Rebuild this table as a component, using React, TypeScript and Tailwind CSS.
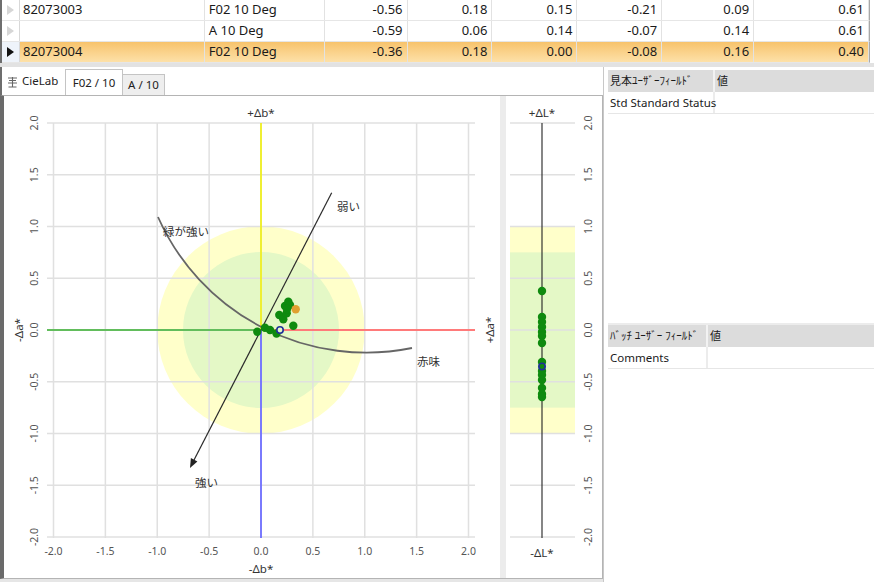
import React from "react";

type Row = { id: string; ill: string; v: string[]; sel?: boolean };

const rows: Row[] = [
  { id: "82073003", ill: "F02 10 Deg", v: ["-0.56", "0.18", "0.15", "-0.21", "0.09", "0.61"] },
  { id: "", ill: "A 10 Deg", v: ["-0.59", "0.06", "0.14", "-0.07", "0.14", "0.61"] },
  { id: "82073004", ill: "F02 10 Deg", v: ["-0.36", "0.18", "0.00", "-0.08", "0.16", "0.40"], sel: true },
];

// value column widths, written out so tailwind picks them up
const valueCols = ["w-[83px]", "w-[85px]", "w-[85px]", "w-[85px]", "w-[92px]", "w-[115px]"];

const ticks = [-2, -1.5, -1, -0.5, 0, 0.5, 1, 1.5, 2];
const CX = 261;
const CY = 330;
const UX = 103.75;
const UY = 103.5;
const px = (v: number) => CX + v * UX;
const py = (v: number) => CY - v * UY;
const fmt = (v: number) => v.toFixed(1);

const abDots: [number, number][] = [
  [257.3, 331.7], [265, 327.7], [270, 330], [276.5, 333.5], [293.3, 325.7],
  [279.3, 315], [283.3, 319.3], [286.7, 313.3], [285, 306], [288.3, 301.7],
  [290, 305], [287, 309],
];

const lDots = [291, 317, 322, 327, 332, 336, 343, 362, 371, 375, 380, 388, 394, 397];

function Arrow({ sel }: { sel?: boolean }) {
  return (
    <svg width="7" height="10" viewBox="0 0 7 10">
      <polygon points="0,0 7,5 0,10" fill={sel ? "#111" : "#d6d6d6"} />
    </svg>
  );
}

function DataGrid() {
  return (
    <div className="h-[63px] flex flex-col border-l-2 border-[#6e6e6e] overflow-hidden">
      {rows.map((r, i) => (
        <div
          key={i}
          className={
            "flex h-[21px] w-[868px] border-b border-[#e6e6e6] border-r border-r-[#a8a8a8] text-[13px] text-[#1a1a1a] " +
            (r.sel ? "bg-linear-to-b from-[#f7c36b] to-[#fde1a8]" : "bg-white")
          }
        >
          <div
            className={
              "w-[18px] flex items-center justify-center border-r border-[#d8d8d8] " +
              (r.sel ? "bg-[#eef3fa]" : "bg-white")
            }
          >
            <Arrow sel={r.sel} />
          </div>
          <div className="w-[185px] flex items-center pl-[3px] border-r border-[#e2e2e2]">{r.id}</div>
          <div className="w-[120px] flex items-center pl-[4px] border-r border-[#e2e2e2]">{r.ill}</div>
          {r.v.map((val, j) => (
            <div
              key={j}
              className={valueCols[j] + " flex items-center justify-end pr-[4px] border-r border-[#e2e2e2]"}
            >
              {val}
            </div>
          ))}
        </div>
      ))}
    </div>
  );
}

function TabRow() {
  return (
    <div className="h-[28px] flex items-end border-l-2 border-[#6e6e6e] bg-white text-[11.5px] text-[#222]">
      <div className="self-stretch w-[63px] flex items-center gap-[4px] pl-[5px]">
        <svg width="11" height="12" viewBox="0 0 11 12" className="mt-[2px]">
          <path d="M1 2h9M2 4.5h7M1 7h9M5.5 1v10M1.5 11h8" stroke="#666" strokeWidth="1.1" fill="none" />
        </svg>
        <span>CieLab</span>
      </div>
      <div className="h-[26px] w-[58px] flex items-center justify-center border border-b-0 border-[#c4c4c4] bg-white">
        F02 / 10
      </div>
      <div className="h-[21px] w-[42px] flex items-center justify-center border border-l-0 border-b-0 border-[#c4c4c4] bg-[#eeeeee]">
        A / 10
      </div>
    </div>
  );
}

function AbChart() {
  const tipX = 190;
  const tipY = 468;
  return (
    <svg width="496" height="482" viewBox="4 96 496 482" className="block shrink-0">
      <circle cx={CX} cy={CY} r={103.75} fill="#ffffca" />
      <circle cx={CX} cy={CY} r={78} fill="#e4f8c6" />
      {ticks.map((t) => (
        <line key={"v" + t} x1={px(t)} y1={123} x2={px(t)} y2={538} stroke="#e0e0e0" strokeWidth="1.5" />
      ))}
      {ticks.map((t) => (
        <line key={"h" + t} x1={47} y1={py(t)} x2={475} y2={py(t)} stroke="#e0e0e0" strokeWidth="1.5" />
      ))}
      <line x1={47} y1={CY} x2={CX} y2={CY} stroke="#62bd5c" strokeWidth="1.8" />
      <line x1={CX} y1={CY} x2={475} y2={CY} stroke="#ff7a7a" strokeWidth="1.8" />
      <line x1={CX} y1={CY} x2={CX} y2={123} stroke="#f0f020" strokeWidth="1.8" />
      <line x1={CX} y1={CY} x2={CX} y2={538} stroke="#6e6eff" strokeWidth="1.8" />
      <path d="M158 217 A228 228 0 0 0 412 348" stroke="#666" strokeWidth="1.8" fill="none" />
      <line x1={331.7} y1={192.7} x2={194} y2={460} stroke="#2b2b2b" strokeWidth="1.2" />
      <polygon points={`${tipX},${tipY} 197.4,461.4 190.9,458.1`} fill="#222" />
      {abDots.map(([x, y], i) => (
        <circle key={i} cx={x} cy={y} r={4.2} fill="#0f8a0f" />
      ))}
      <circle cx={295.7} cy={309.3} r={4.2} fill="#e0a030" />
      <circle cx={280} cy={330} r={3.2} fill="#e4f8c6" stroke="#1f2f9a" strokeWidth="1.6" />

      <g fill="#555" fontSize="10.5">
        {ticks.map((t) => (
          <text key={"xl" + t} x={px(t)} y={551} textAnchor="middle" dominantBaseline="central">
            {fmt(t)}
          </text>
        ))}
        {ticks.map((t) => (
          <text
            key={"yl" + t}
            x={34}
            y={py(t)}
            textAnchor="middle"
            dominantBaseline="central"
            transform={`rotate(-90 34 ${py(t)})`}
          >
            {fmt(t)}
          </text>
        ))}
      </g>
      <g fill="#333" fontSize="11.5">
        <text x={CX} y={112} textAnchor="middle" dominantBaseline="central">+Δb*</text>
        <text x={CX} y={568} textAnchor="middle" dominantBaseline="central">-Δb*</text>
        <text x={18} y={CY} textAnchor="middle" dominantBaseline="central" transform={`rotate(-90 18 ${CY})`}>
          -Δa*
        </text>
        <text x={489} y={CY} textAnchor="middle" dominantBaseline="central" transform={`rotate(-90 489 ${CY})`}>
          +Δa*
        </text>
        <text x={163} y={236}>緑が強い</text>
        <text x={337} y={211}>弱い</text>
        <text x={417} y={366}>赤味</text>
        <text x={195} y={487}>強い</text>
      </g>
    </svg>
  );
}

function LChart() {
  const lx = 542;
  return (
    <svg width="96" height="482" viewBox="506 96 96 482" className="block shrink-0">
      <rect x={510} y={py(1)} width={65} height={py(-1) - py(1)} fill="#ffffca" />
      <rect x={510} y={py(0.75)} width={65} height={py(-0.75) - py(0.75)} fill="#e4f8c6" />
      {ticks.map((t) => (
        <line key={t} x1={510} y1={py(t)} x2={575} y2={py(t)} stroke="#e0e0e0" strokeWidth="1.5" />
      ))}
      <line x1={lx} y1={123} x2={lx} y2={538} stroke="#222" strokeWidth="1.1" />
      {lDots.map((y, i) => (
        <circle key={i} cx={lx} cy={y} r={4.2} fill="#0f8a0f" />
      ))}
      <circle cx={lx} cy={366.5} r={3.2} fill="#0f8a0f" stroke="#1f2f9a" strokeWidth="1.6" />
      <g fill="#555" fontSize="10.5">
        {ticks.map((t) => (
          <text
            key={"l" + t}
            x={588}
            y={py(t)}
            textAnchor="middle"
            dominantBaseline="central"
            transform={`rotate(-90 588 ${py(t)})`}
          >
            {fmt(t)}
          </text>
        ))}
      </g>
      <g fill="#333" fontSize="11.5">
        <text x={lx} y={112} textAnchor="middle" dominantBaseline="central">+ΔL*</text>
        <text x={lx} y={552} textAnchor="middle" dominantBaseline="central">-ΔL*</text>
      </g>
    </svg>
  );
}

function FieldTable({ title, label, first }: { title: string; label: string; first: string }) {
  return (
    <div className="flex flex-col text-[11.5px] text-[#1a1a1a]">
      <div className="flex h-[22px] bg-[#dcdcdc] text-[11px]">
        <div className={first + " flex items-center pl-[2px] border-r-2 border-[#f2f2f2] whitespace-nowrap"}>{title}</div>
        <div className="flex items-center pl-[2px]">値</div>
      </div>
      <div className="flex h-[22px] border-b border-[#e6e6e6]">
        <div className={first + " flex items-center pl-[2px] border-r-2 border-[#ececec] whitespace-nowrap"}>{label}</div>
        <div className="flex-1" />
      </div>
    </div>
  );
}

export default function App() {
  return (
    <div className="w-[874px] h-[582px] overflow-hidden bg-white flex flex-col font-['Noto_Sans','Noto_Sans_CJK_JP',sans-serif]">
      <DataGrid />
      <div className="h-[4px] bg-[#e2e2e2]" />
      <div className="flex-1 flex min-h-0">
        <div className="w-[603px] flex flex-col">
          <TabRow />
          <div className="h-[484px] flex border-l-4 border-l-[#6a6a6a] border-t border-r border-b border-[#b4b4b4] bg-white">
            <AbChart />
            <div className="w-[6px] bg-[#ececec]" />
            <LChart />
          </div>
          <div className="flex-1 bg-[#e6e6e6]" />
        </div>
        <div className="flex-1 flex flex-col border-l border-[#c8c8c8] bg-white pl-[4px]">
          <div className="h-[256px] pt-[3px]">
            <FieldTable title="見本ﾕｰｻﾞｰﾌｨｰﾙﾄﾞ" label="Std Standard Status" first="w-[107px]" />
          </div>
          <div className="flex-1 border-t-2 border-[#ececec]">
            <FieldTable title="ﾊﾞｯﾁ ﾕｰｻﾞｰ ﾌｨｰﾙﾄﾞ" label="Comments" first="w-[100px]" />
          </div>
        </div>
      </div>
    </div>
  );
}
